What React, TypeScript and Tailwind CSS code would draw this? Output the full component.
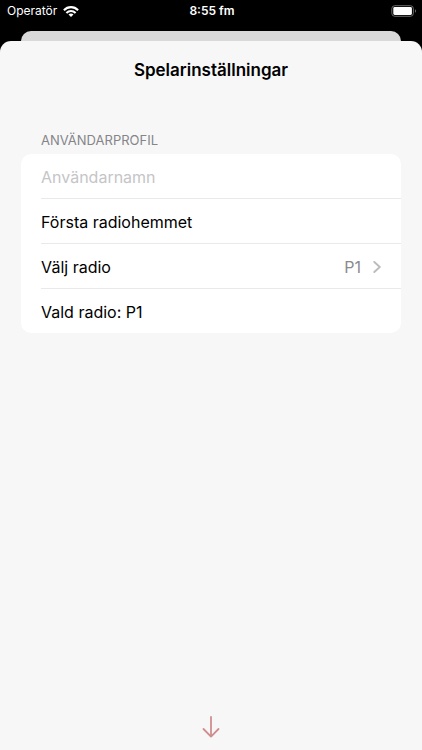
import type { ReactNode } from "react";

function StatusBar() {
    return (
        <header className="grid grid-cols-3 items-center h-[22px] pl-[7px] pr-[5px] text-white">
            <div className="flex items-center gap-[6px]">
                <span className="text-[12px]">Operatör</span>
                <svg className="w-4 h-[11px]" viewBox="0 0 16 11" fill="none" stroke="currentColor" strokeWidth="2.1">
                    <path d="M0.9 4.2C4.9 0.1 11.1 0.1 15.1 4.2" />
                    <path d="M3.4 6.9C6 4.4 10 4.4 12.6 6.9" />
                    <path d="M8 11L5.5 8.6C7 7.2 9 7.2 10.5 8.6Z" fill="currentColor" stroke="none" />
                </svg>
            </div>
            <span className="text-center text-[12px] font-semibold">8:55 fm</span>
            <svg className="w-[26px] h-3 justify-self-end" viewBox="0 0 26 12" fill="none">
                <rect x="0.8" y="0.7" width="21.6" height="10.6" rx="3" stroke="#6b6b6b" strokeWidth="1" />
                <rect x="2.3" y="2" width="18.6" height="8" rx="1.4" fill="#fff" />
                <path d="M24 4.2C25.4 4.8 25.4 7.2 24 7.8Z" fill="#6b6b6b" />
            </svg>
        </header>
    )
}

function Row({ children }: { children: ReactNode }) {
    return (
        <li className="group pl-5">
            <div className="flex items-center h-[45px] pt-0.5 pr-5 border-b border-[#e9e9ea] group-last:h-11 group-last:border-b-0">
                {children}
            </div>
        </li>
    )
}

export default function App() {
    return (
        <div className="flex flex-col min-h-screen bg-black font-['Inter','Liberation_Sans',sans-serif] text-black">
            <StatusBar />
            <div className="h-[10px] mx-[21px] mt-[9px] rounded-t-[10px] bg-[#d9d9d9]" />

            <main className="flex flex-col flex-1 px-[21px] rounded-t-[11px] bg-[#f7f7f7]">
                <h1 className="pt-[17px] text-center text-[17px] leading-6 font-semibold">Spelarinställningar</h1>

                <section className="pt-12">
                    <h2 className="pl-5 pb-1 text-[13px] leading-5 text-[#858589]">ANVÄNDARPROFIL</h2>
                    <ul className="rounded-[10px] bg-white text-[16px]">
                        <Row>
                            <input
                                type="text"
                                aria-label="Användarnamn"
                                placeholder="Användarnamn"
                                className="w-full outline-none placeholder:text-[#c5c5c7]"
                            />
                        </Row>
                        <Row>Första radiohemmet</Row>
                        <Row>
                            <button type="button" className="flex items-center w-full">
                                <span>Välj radio</span>
                                <span className="ml-auto text-[#8a8a8e]">P1</span>
                                <svg className="ml-3 w-2 h-3" viewBox="0 0 8 12" fill="none" stroke="#bcbcbf" strokeWidth="1.9" strokeLinecap="round" strokeLinejoin="round">
                                    <path d="M1.3 1L6.8 6L1.3 11" />
                                </svg>
                            </button>
                        </Row>
                        <Row>Vald radio: P1</Row>
                    </ul>
                </section>

                <button type="button" aria-label="Stäng" className="mt-auto mb-3 self-center">
                    <svg className="w-[18px] h-[22px]" viewBox="0 0 18 22" fill="none" stroke="#cf8e8e" strokeWidth="1.8" strokeLinecap="round" strokeLinejoin="round">
                        <path d="M9 1V20.5M1.5 13L9 20.7L16.5 13" />
                    </svg>
                </button>
            </main>
        </div>
    )
}
